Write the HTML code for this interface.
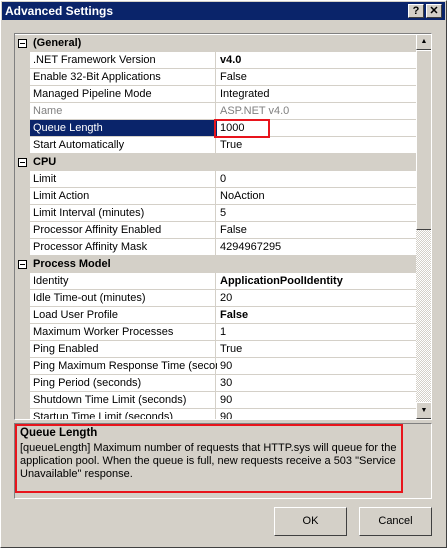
<!DOCTYPE html><html><head><style>
body{margin:0;width:447px;height:548px;background:#d4d0c8;font:11px "Liberation Sans",sans-serif;position:relative;overflow:hidden}
.a{position:absolute}
#frame{left:0;top:0;width:445px;height:546px;border:1px solid #fff;border-right-color:#404040;border-bottom-color:#404040}
#title{left:2px;top:2px;width:443px;height:18px;background:#0a246a;color:#fff;font-weight:bold;font-size:12px;line-height:18px;text-indent:3px}
.tb{top:4px;width:14px;height:12px;background:#d4d0c8;border:1px solid;border-color:#fff #404040 #404040 #fff;color:#000;font:bold 11px "Liberation Sans";text-align:center;line-height:12px}
#grid{left:14px;top:33px;width:416px;height:384px;padding-top:1px;border:1px solid #808080;border-right-color:#fff;border-bottom-color:#fff;background:#fff;overflow:hidden}
.r{position:relative;height:16px;border-bottom:1px solid #d4d0c8;line-height:17px;white-space:nowrap}
.c{background:#d4d0c8;font-weight:bold;padding-left:18px;}
.c i{position:absolute;left:3px;top:4px;width:7px;height:7px;border:1px solid #000;background:#fff}
.c i:after{content:"";position:absolute;left:1px;top:3px;width:5px;height:1px;background:#000}
.n{position:absolute;left:0;width:15px;height:17px;background:#d4d0c8}
.k{position:absolute;left:15px;width:184px;padding-left:3px;overflow:hidden;height:16px}
.v{position:absolute;left:200px;padding-left:4px;border-left:1px solid #d4d0c8;height:16px;width:200px}
.sel .k{background:#0a246a;color:#fff}
.g{color:#808080}
.b{font-weight:bold}
#sb{left:401px;top:0;width:16px;height:385px;background:repeating-conic-gradient(#d4d0c8 0 25%,#fff 0 50%) 0 0/2px 2px}
.btn3{position:absolute;left:0;width:14px;background:#d4d0c8;border:1px solid;border-color:#fff #404040 #404040 #fff}
#desc{left:14px;top:423px;width:416px;height:74px;border:1px solid #808080;border-right-color:#fff;border-bottom-color:#fff}
.pb{top:507px;width:71px;height:27px;border:1px solid;border-color:#fff #404040 #404040 #fff;background:#d4d0c8;text-align:center;line-height:27px;font-size:11px}
</style></head><body>
<div class="a" id="frame"></div>
<div class="a" id="title">Advanced Settings</div>
<div class="a tb" style="left:408px">?</div>
<div class="a tb" style="left:426px">✕</div>
<div class="a" id="grid">
<div class="r c"><i></i>(General)</div>
<div class="r"><span class="n"></span><span class="k">.NET Framework Version</span><span class="v b">v4.0</span></div>
<div class="r"><span class="n"></span><span class="k">Enable 32-Bit Applications</span><span class="v">False</span></div>
<div class="r"><span class="n"></span><span class="k">Managed Pipeline Mode</span><span class="v">Integrated</span></div>
<div class="r g"><span class="n"></span><span class="k">Name</span><span class="v">ASP.NET v4.0</span></div>
<div class="r sel"><span class="n"></span><span class="k">Queue Length</span><span class="v">1000</span></div>
<div class="r"><span class="n"></span><span class="k">Start Automatically</span><span class="v">True</span></div>
<div class="r c"><i></i>CPU</div>
<div class="r"><span class="n"></span><span class="k">Limit</span><span class="v">0</span></div>
<div class="r"><span class="n"></span><span class="k">Limit Action</span><span class="v">NoAction</span></div>
<div class="r"><span class="n"></span><span class="k">Limit Interval (minutes)</span><span class="v">5</span></div>
<div class="r"><span class="n"></span><span class="k">Processor Affinity Enabled</span><span class="v">False</span></div>
<div class="r"><span class="n"></span><span class="k">Processor Affinity Mask</span><span class="v">4294967295</span></div>
<div class="r c"><i></i>Process Model</div>
<div class="r"><span class="n"></span><span class="k">Identity</span><span class="v b">ApplicationPoolIdentity</span></div>
<div class="r"><span class="n"></span><span class="k">Idle Time-out (minutes)</span><span class="v">20</span></div>
<div class="r"><span class="n"></span><span class="k">Load User Profile</span><span class="v b">False</span></div>
<div class="r"><span class="n"></span><span class="k">Maximum Worker Processes</span><span class="v">1</span></div>
<div class="r"><span class="n"></span><span class="k">Ping Enabled</span><span class="v">True</span></div>
<div class="r"><span class="n"></span><span class="k">Ping Maximum Response Time (seconds)</span><span class="v">90</span></div>
<div class="r"><span class="n"></span><span class="k">Ping Period (seconds)</span><span class="v">30</span></div>
<div class="r"><span class="n"></span><span class="k">Shutdown Time Limit (seconds)</span><span class="v">90</span></div>
<div class="r"><span class="n"></span><span class="k">Startup Time Limit (seconds)</span><span class="v">90</span></div>
<div class="a" id="sb">
<div class="btn3" style="top:0;height:14px;font-size:7px;text-align:center;line-height:14px">▲</div>
<div class="btn3" style="top:16px;height:178px"></div>
<div class="btn3" style="top:368px;height:15px;font-size:7px;text-align:center;line-height:15px">▼</div>
</div>
</div>
<div class="a" style="left:214px;top:119px;width:52px;height:15px;border:2px solid #e8141c"></div>
<div class="a" id="desc"></div>
<div class="a" style="left:15px;top:424px;width:384px;height:65px;border:2px solid #e8141c"></div>
<div class="a" style="left:20px;top:427px;font-weight:bold;font-size:11.5px">Queue Length</div>
<div class="a" style="left:20px;top:442px;width:380px;line-height:13px">[queueLength] Maximum number of requests that HTTP.sys will queue for the application pool. When the queue is full, new requests receive a 503 "Service Unavailable" response.</div>
<div class="a pb" style="left:274px">OK</div>
<div class="a pb" style="left:359px">Cancel</div>
</body></html>
